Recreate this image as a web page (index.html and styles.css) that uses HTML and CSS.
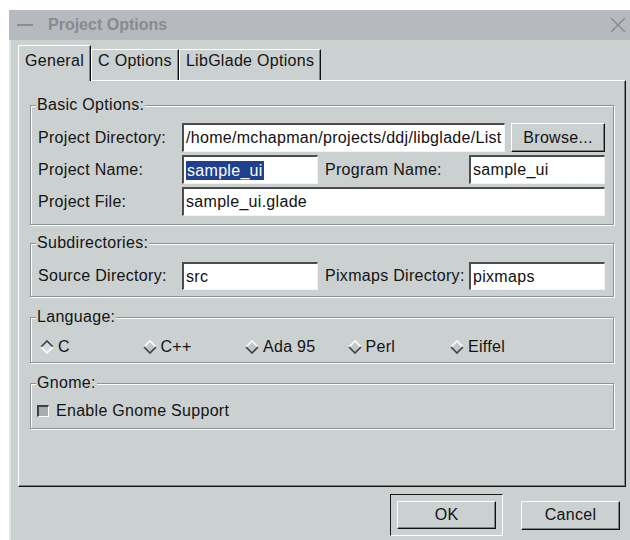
FILE: index.html
```html
<!DOCTYPE html>
<html lang="en">
<head>
<meta charset="utf-8">
<title>Project Options</title>
<link rel="stylesheet" href="styles.css">
</head>
<body>
<div class="window">
  <div class="titlebar">
    <span class="tb-dash"></span>
    <span class="tb-title">Project Options</span>
    <svg class="tb-close" viewBox="0 0 16 16" width="16" height="16" aria-hidden="true">
      <path d="M1 1 L15 15 M15 1 L1 15" stroke="#8a8d92" stroke-width="1.6" fill="none"/>
    </svg>
  </div>

  <div class="client">
    <div class="notebook">
      <div class="tabs">
        <div class="tab active">General</div>
        <div class="tab">C Options</div>
        <div class="tab">LibGlade Options</div>
      </div>

      <div class="page">
        <fieldset class="frame frame-basic">
          <legend>Basic Options:</legend>
          <div class="grid">
            <span class="label">Project Directory:</span>
            <div class="dir-row">
              <div class="entry">/home/mchapman/projects/ddj/libglade/List</div>
              <div class="button browse">Browse...</div>
            </div>

            <span class="label">Project Name:</span>
            <div class="entry"><span class="selected">sample_ui</span></div>
            <span class="label label-second">Program Name:</span>
            <div class="entry">sample_ui</div>

            <span class="label">Project File:</span>
            <div class="entry entry-wide">sample_ui.glade</div>
          </div>
        </fieldset>

        <fieldset class="frame frame-subdirs">
          <legend>Subdirectories:</legend>
          <div class="grid grid-single">
            <span class="label">Source Directory:</span>
            <div class="entry">src</div>
            <span class="label label-second">Pixmaps Directory:</span>
            <div class="entry">pixmaps</div>
          </div>
        </fieldset>

        <fieldset class="frame frame-language">
          <legend>Language:</legend>
          <div class="radios">
            <div class="radio">
              <svg class="diamond" viewBox="0 0 14 14" width="14" height="14" aria-hidden="true">
                <polygon points="7,1 13,7 7,13 1,7" fill="#d9dcdc"/>
                <polyline points="1,7 7,1 13,7" stroke="#3e4040" stroke-width="1.6" fill="none"/>
                <polyline points="1,7 7,13 13,7" stroke="#ffffff" stroke-width="1.6" fill="none"/>
              </svg>
              <span>C</span>
            </div>
            <div class="radio">
              <svg class="diamond" viewBox="0 0 14 14" width="14" height="14" aria-hidden="true">
                <polygon points="7,1 13,7 7,13 1,7" fill="#c3c7c7"/>
                <polyline points="1,7 7,1 13,7" stroke="#ffffff" stroke-width="1.6" fill="none"/>
                <polyline points="1,7 7,13 13,7" stroke="#3e4040" stroke-width="1.6" fill="none"/>
              </svg>
              <span>C++</span>
            </div>
            <div class="radio">
              <svg class="diamond" viewBox="0 0 14 14" width="14" height="14" aria-hidden="true">
                <polygon points="7,1 13,7 7,13 1,7" fill="#c3c7c7"/>
                <polyline points="1,7 7,1 13,7" stroke="#ffffff" stroke-width="1.6" fill="none"/>
                <polyline points="1,7 7,13 13,7" stroke="#3e4040" stroke-width="1.6" fill="none"/>
              </svg>
              <span>Ada 95</span>
            </div>
            <div class="radio">
              <svg class="diamond" viewBox="0 0 14 14" width="14" height="14" aria-hidden="true">
                <polygon points="7,1 13,7 7,13 1,7" fill="#c3c7c7"/>
                <polyline points="1,7 7,1 13,7" stroke="#ffffff" stroke-width="1.6" fill="none"/>
                <polyline points="1,7 7,13 13,7" stroke="#3e4040" stroke-width="1.6" fill="none"/>
              </svg>
              <span>Perl</span>
            </div>
            <div class="radio">
              <svg class="diamond" viewBox="0 0 14 14" width="14" height="14" aria-hidden="true">
                <polygon points="7,1 13,7 7,13 1,7" fill="#c3c7c7"/>
                <polyline points="1,7 7,1 13,7" stroke="#ffffff" stroke-width="1.6" fill="none"/>
                <polyline points="1,7 7,13 13,7" stroke="#3e4040" stroke-width="1.6" fill="none"/>
              </svg>
              <span>Eiffel</span>
            </div>
          </div>
        </fieldset>

        <fieldset class="frame frame-gnome">
          <legend>Gnome:</legend>
          <div class="check">
            <span class="checkbox"></span>
            <span>Enable Gnome Support</span>
          </div>
        </fieldset>
      </div>
    </div>

    <div class="actions">
      <div class="default-frame">
        <div class="button action">OK</div>
      </div>
      <div class="button action cancel">Cancel</div>
    </div>
  </div>
</div>
</body>
</html>
```

FILE: styles.css
```css
* {
  box-sizing: border-box;
}

body {
  margin: 0;
  background: #ffffff;
  font-family: "Liberation Sans", Arial, sans-serif;
  font-size: 16px;
  letter-spacing: 0.3px;
  color: #141414;
}

/* window frame */
.window {
  margin: 10px 0 0 9px;
  width: 621px;
  height: 530px;
  background: #cbd0d0;
  display: flex;
  flex-direction: column;
}

.titlebar {
  height: 30px;
  flex: none;
  background: #b6b9be;
  display: flex;
  align-items: center;
  padding: 0 4px 0 8px;
}

.tb-dash {
  width: 16px;
  height: 2px;
  background: #8a8d92;
}

.tb-title {
  flex: 1;
  margin-left: 15px;
  font-weight: bold;
  color: #888b90;
  letter-spacing: 0;
}

.tb-close {
  display: block;
}

.client {
  flex: 1;
  display: flex;
  flex-direction: column;
  padding: 5px 4px 0 9px;
  border-left: 2px solid #e2e5e5;
}

/* notebook */
.notebook {
  display: flex;
  flex-direction: column;
  margin-left: -2px;
}

.tabs {
  display: flex;
  align-items: flex-end;
  height: 35px;
}

.tab {
  height: 31px;
  padding: 2px 6px 0 6px;
  line-height: 17px;
  border-top: 1px solid #ffffff;
  border-left: 1px solid #ffffff;
  border-right: 1px solid #111111;
  box-shadow: inset -1px 0 0 #7e8282;
  background: #cbd0d0;
}

.tab.active {
  position: relative;
  z-index: 1;
  height: 36px;
  margin-bottom: -1px;
  padding-top: 6px;
}

.page {
  height: 407px;
  border-top: 1px solid #ffffff;
  border-left: 1px solid #ffffff;
  border-right: 1px solid #111111;
  border-bottom: 1px solid #111111;
  box-shadow: inset -1px -1px 0 #7e8282;
  padding: 16px 11px 0 11px;
}

/* etched frames */
.frame {
  margin: 0;
  min-inline-size: 0;
  padding: 10px 7px 8px 7px;
  border: 1px solid #8e9292;
  box-shadow: inset 1px 1px 0 #ffffff, 1px 1px 0 #ffffff;
}

.frame legend {
  padding: 0 1px;
  margin-left: -2px;
  line-height: 16px;
  background: #cbd0d0;
}

.frame-subdirs {
  margin-top: 10px;
  padding-top: 11px;
  padding-bottom: 6px;
}

.frame-language {
  margin-top: 12px;
  padding-top: 12px;
  padding-bottom: 5px;
}

.frame-gnome {
  margin-top: 12px;
  padding-bottom: 7px;
}

.grid {
  display: grid;
  grid-template-columns: 144px 136px 151px 136px;
  grid-auto-rows: 29px;
  row-gap: 3px;
}

.grid-single {
  grid-auto-rows: 28px;
}

.label {
  align-self: center;
  white-space: nowrap;
}

.label-second {
  padding-left: 7px;
}

.dir-row {
  grid-column: 2 / 5;
  display: flex;
  gap: 6px;
}

.dir-row .entry {
  flex: 1;
}

.entry {
  min-width: 0;
  background: #ffffff;
  border-top: 2px solid #4b4d4d;
  border-left: 2px solid #4b4d4d;
  border-right: 1px solid #f2f4f4;
  border-bottom: 1px solid #f2f4f4;
  padding: 0 2px;
  display: flex;
  align-items: center;
  white-space: nowrap;
  overflow: hidden;
  color: #111111;
}

.entry-wide {
  grid-column: 2 / 5;
}

.selected {
  background: #1f3f8f;
  color: #ffffff;
  line-height: 19px;
  padding: 0 1px;
}

/* push buttons */
.button {
  background: #cbd0d0;
  border-top: 1px solid #ffffff;
  border-left: 1px solid #ffffff;
  border-right: 1px solid #111111;
  border-bottom: 1px solid #111111;
  box-shadow: inset -1px -1px 0 #7e8282;
  display: flex;
  align-items: center;
  justify-content: center;
  white-space: nowrap;
}

.browse {
  width: 94px;
  flex: none;
}

/* radio buttons */
.radios {
  display: grid;
  grid-template-columns: repeat(5, 102.5px);
  height: 20px;
  align-items: center;
  padding-left: 2px;
}

.radio {
  display: flex;
  align-items: center;
  gap: 4px;
}

.diamond {
  display: block;
}

/* check button */
.check {
  display: flex;
  align-items: center;
  gap: 7px;
  height: 20px;
  margin-left: -1px;
}

.checkbox {
  width: 12px;
  height: 12px;
  background: #a9adb3;
  border-top: 2px solid #3e4040;
  border-left: 2px solid #3e4040;
  border-right: 1px solid #ffffff;
  border-bottom: 1px solid #ffffff;
}

/* dialog action area */
.actions {
  flex: 1;
  display: flex;
  justify-content: flex-end;
  align-items: center;
  gap: 18px;
  padding: 3px 6px 0 0;
}

.default-frame {
  padding: 6px;
  border-top: 1px solid #1a1a1a;
  border-left: 1px solid #1a1a1a;
  border-right: 1px solid #ffffff;
  border-bottom: 1px solid #ffffff;
}

.action {
  width: 99px;
  height: 28px;
}

.cancel {
  height: 29px;
}
```
